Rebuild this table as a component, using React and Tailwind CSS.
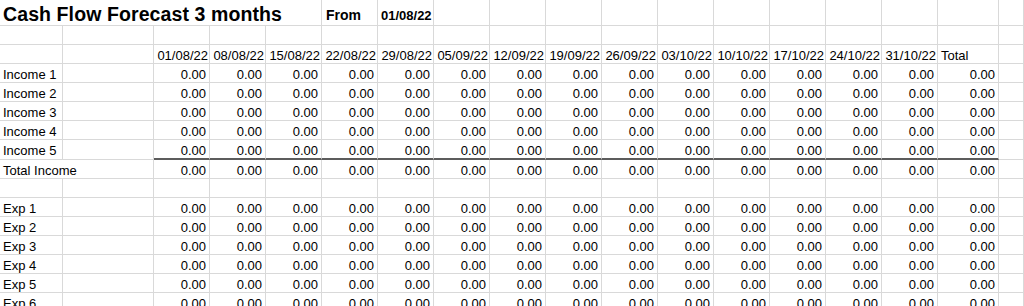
import React from "react";

const dates = [
  "01/08/22", "08/08/22", "15/08/22", "22/08/22", "29/08/22", "05/09/22", "12/09/22",
  "19/09/22", "26/09/22", "03/10/22", "10/10/22", "17/10/22", "24/10/22", "31/10/22",
];

const G = "border-r border-b border-[#d9d9d9]";

function Cell({ children, className = "", h = "h-[19px]", align = "left" }) {
  return (
    <div
      className={`${G} ${h} flex items-end overflow-hidden whitespace-nowrap leading-[15px] ${
        align === "right" ? "justify-end pr-[3px]" : "justify-start pl-[3px]"
      } ${className}`}
    >
      {children}
    </div>
  );
}

function BlankRow() {
  return (
    <>
      {Array.from({ length: 18 }).map((_, i) => (
        <Cell key={i} />
      ))}
    </>
  );
}

function DataRow({ label, span = false, thick = false }) {
  const h = thick ? "h-[20px]" : "h-[19px]";
  const thickCls = thick ? "border-b-2 border-b-[#5c5c5c]" : "";
  const nonThickPad = thick ? "pb-[1px]" : "";
  return (
    <>
      {span ? (
        <div
          className={`col-span-2 ${G} ${h} flex items-end pl-[3px] leading-[15px] whitespace-nowrap ${nonThickPad}`}
        >
          {label}
        </div>
      ) : (
        <>
          <Cell h={h} className={nonThickPad}>{label}</Cell>
          <Cell h={h} className={nonThickPad} />
        </>
      )}
      {dates.map((d) => (
        <Cell key={d} h={h} align="right" className={thickCls}>
          0.00
        </Cell>
      ))}
      <Cell h={h} align="right" className={thickCls}>
        0.00
      </Cell>
      <Cell h={h} className={nonThickPad} />
    </>
  );
}

export default function App() {
  return (
    <div className="w-[1024px] h-[306px] overflow-hidden bg-white text-black text-[13px] font-['Liberation_Sans',Arial,sans-serif]">
      <div className="grid grid-cols-[63px_91px_repeat(14,56px)_61px_25px]">
        {/* Row 1 */}
        <div className={`col-span-5 ${G} h-[26px] flex items-end pl-[3px] whitespace-nowrap`}>
          <span className="text-[19.5px] font-bold leading-[22px] tracking-[0.1px]">
            Cash Flow Forecast 3 months
          </span>
        </div>
        <div className={`${G} h-[26px] flex items-end pl-[4px] pb-[2px] whitespace-nowrap`}>
          <span className="text-[14px] font-bold leading-[15px]">From</span>
        </div>
        <div className={`${G} h-[26px] flex items-end pl-[3px] pb-[2px] whitespace-nowrap`}>
          <span className="text-[13px] font-bold leading-[15px]">01/08/22</span>
        </div>
        {Array.from({ length: 11 }).map((_, i) => (
          <div key={i} className={`${G} h-[26px]`} />
        ))}

        {/* Row 2 */}
        <BlankRow />

        {/* Row 3 header */}
        <Cell />
        <Cell />
        {dates.map((d) => (
          <div
            key={d}
            className={`${G} h-[19px] flex items-end justify-end pr-[1px] leading-[15px] whitespace-nowrap overflow-hidden`}
          >
            {d}
          </div>
        ))}
        <Cell>Total</Cell>
        <Cell />

        {/* Income */}
        <DataRow label="Income 1" />
        <DataRow label="Income 2" />
        <DataRow label="Income 3" />
        <DataRow label="Income 4" />
        <DataRow label="Income 5" thick />
        <DataRow label="Total Income" span />

        <BlankRow />

        <DataRow label="Exp 1" />
        <DataRow label="Exp 2" />
        <DataRow label="Exp 3" />
        <DataRow label="Exp 4" />
        <DataRow label="Exp 5" />
        <DataRow label="Exp 6" />
        <DataRow label="Exp 7" />
      </div>
    </div>
  );
}
